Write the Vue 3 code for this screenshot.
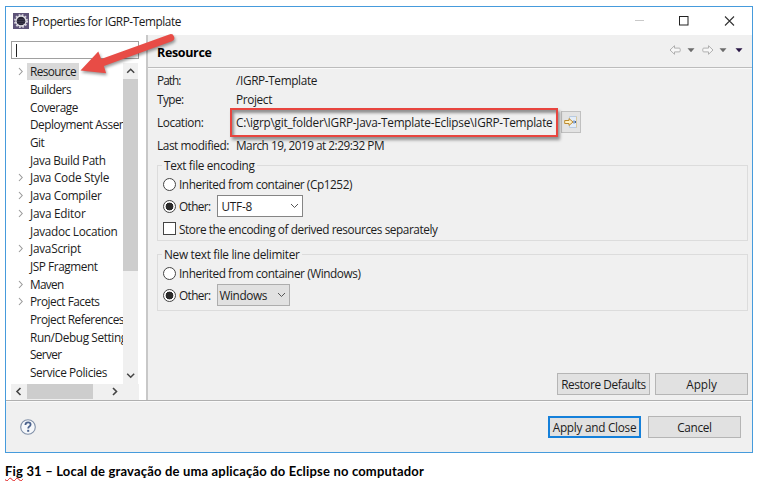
<script setup>
const tree = [
  { label: 'Resource', w: 46, parent: true, selected: true },
  { label: 'Builders', w: 41 },
  { label: 'Coverage', w: 48 },
  { label: 'Deployment Assembly', w: 114 },
  { label: 'Git', w: 14 },
  { label: 'Java Build Path', w: 75.5 },
  { label: 'Java Code Style', w: 79, parent: true },
  { label: 'Java Compiler', w: 71.5, parent: true },
  { label: 'Java Editor', w: 55.5, parent: true },
  { label: 'Javadoc Location', w: 87.5 },
  { label: 'JavaScript', w: 51, parent: true },
  { label: 'JSP Fragment', w: 67.5 },
  { label: 'Maven', w: 33.5, parent: true },
  { label: 'Project Facets', w: 69.5, parent: true },
  { label: 'Project References', w: 94 },
  { label: 'Run/Debug Settings', w: 102 },
  { label: 'Server', w: 31.5 },
  { label: 'Service Policies', w: 77 },
]

// Adjusts tracking so that a label takes the given width in pixels.
const vFit = {
  mounted(el, { value }) {
    const natural = el.getBoundingClientRect().width
    const count = el.textContent.length
    el.style.letterSpacing = `${(value - natural) / count}px`
  },
}
</script>

<template>
  <main class="page">
    <section class="window">
      <header class="titlebar">
        <svg class="app-icon" width="16" height="16" viewBox="0 0 16 16">
          <rect width="16" height="16" fill="#5d5378" />
          <circle cx="8" cy="8" r="6.1" fill="none" stroke="#d6d3dc" stroke-width="1.8" stroke-dasharray="1.7 1.5" />
          <circle cx="8" cy="8" r="5" fill="#272535" stroke="#e6e4ea" stroke-width="1.3" />
          <path d="M4 6.5h8M3.6 8.5h8.8M4.3 10.5h7.4" stroke="#454154" stroke-width=".7" />
        </svg>
        <span v-fit="149" class="title">Properties for IGRP-Template</span>
        <svg class="controls" width="104" height="14" viewBox="0 0 104 14">
          <path d="M1 6.500h9" stroke="#c9c9c9" />
          <rect x="45.500" y="2.500" width="8.500" height="8.500" fill="none" stroke="#222" />
          <path d="M91 2.500l9 9M100 2.500l-9 9" stroke="#333" stroke-width="1.100" />
        </svg>
      </header>

      <div class="body">
        <aside class="sidebar">
          <div class="filter"><i class="caret"></i></div>
          <div class="tree-wrap">
            <ul class="tree">
              <li v-for="item in tree" :key="item.label">
                <svg class="twisty" width="16" height="9" viewBox="0 0 16 9">
                  <path v-if="item.parent" d="M8 1l3.2 3.5L8 8" fill="none" stroke="#999" stroke-width="1.1" />
                </svg>
                <span class="node" :class="{ selected: item.selected }"><span v-fit="item.w">{{ item.label }}</span></span>
              </li>
            </ul>
            <div class="vbar">
              <svg width="15" height="16" viewBox="0 0 15 16"><path d="M4.2 9.8l3.5-3.5 3.5 3.5" fill="none" stroke="#444" stroke-width="1.5" /></svg>
              <div class="vthumb"></div>
              <svg width="15" height="16" viewBox="0 0 15 16"><path d="M4.2 5.8l3.5 3.5 3.5-3.5" fill="none" stroke="#444" stroke-width="1.5" /></svg>
            </div>
          </div>
          <div class="hbar">
            <svg width="16" height="15" viewBox="0 0 16 15"><path d="M9.500 4L6 7.500 9.500 11" fill="none" stroke="#444" stroke-width="1.6" /></svg>
            <div class="hthumb"></div>
            <svg width="16" height="15" viewBox="0 0 16 15"><path d="M6 4L9.500 7.500 6 11" fill="none" stroke="#444" stroke-width="1.6" /></svg>
          </div>
        </aside>

        <section class="content">
          <header class="page-head">
            <h1><span v-fit="54.5">Resource</span></h1>
            <svg width="76" height="12" viewBox="0 0 76 12">
              <g fill="#f7f7f7" stroke="#b0b0b0">
                <path d="M1 6l4.5-4.3v2.4h4.7q1 0 1 1v1.8q0 1-1 1H5.500v2.400z" />
                <path d="M44 6l-4.500-4.300v2.400h-4.700q-1 0-1 1v1.800q0 1 1 1h4.700v2.400z" />
              </g>
              <path d="M18.500 4.300h7l-3.500 4zM50.500 4.300h7l-3.500 4z" fill="#6c6c6c" />
              <path d="M66.500 4.300h7l-3.500 4z" fill="#2a1745" />
            </svg>
          </header>

          <div class="panel">
            <dl class="info">
              <dt><span v-fit="23.500">Path:</span></dt>
              <dd><span v-fit="81">/IGRP-Template</span></dd>
              <dt><span v-fit="26.500">Type:</span></dt>
              <dd><span v-fit="36">Project</span></dd>
              <dt><span v-fit="46.500">Location:</span></dt>
              <dd class="location">
                <span v-fit="316.500">C:\igrp\git_folder\IGRP-Java-Template-Eclipse\IGRP-Template</span>
                <button class="open-btn" aria-label="Show in explorer">
                  <svg width="14" height="12" viewBox="0 0 14 12">
                    <path d="M5.500.5h7v11h-7z" fill="#e4edf8" stroke="#b9cbe0" />
                    <path d="M12.500.5v11" stroke="#d9c9a0" />
                    <path d="M10 4.500v3M11.500 5v2" stroke="#3e659d" />
                    <path d="M.7 4.500h4.300V2.600L9 6 5 9.400V7.500H.7z" fill="#fff2c4" stroke="#bd8a2f" />
                  </svg>
                </button>
                <div class="highlight"></div>
              </dd>
              <dt><span v-fit="72">Last modified:</span></dt>
              <dd><span v-fit="148">March 19, 2019 at 2:29:32 PM</span></dd>
            </dl>

            <fieldset class="encoding">
              <legend><span v-fit="90.500">Text file encoding</span></legend>
              <div class="option"><i class="radio"></i><span v-fit="173">Inherited from container (Cp1252)</span></div>
              <div class="option">
                <i class="radio on"></i><span v-fit="31.500">Other:</span>
                <div class="combo editable">
                  <span v-fit="30.500">UTF-8</span>
                  <svg width="9" height="6" viewBox="0 0 9 6"><path d="M1 1l3.500 3.500L8 1" fill="none" stroke="#555" /></svg>
                </div>
              </div>
              <div class="option check"><i class="box"></i><span v-fit="258.500">Store the encoding of derived resources separately</span></div>
            </fieldset>

            <fieldset class="delimiter">
              <legend><span v-fit="135.500">New text file line delimiter</span></legend>
              <div class="option"><i class="radio"></i><span v-fit="181.500">Inherited from container (Windows)</span></div>
              <div class="option">
                <i class="radio on"></i><span v-fit="31.500">Other:</span>
                <div class="combo">
                  <span v-fit="47.500">Windows</span>
                  <svg width="9" height="6" viewBox="0 0 9 6"><path d="M1 1l3.500 3.500L8 1" fill="none" stroke="#555" /></svg>
                </div>
              </div>
            </fieldset>

            <div class="page-actions">
              <button class="btn"><span v-fit="84.500">Restore Defaults</span></button>
              <button class="btn"><span v-fit="30.500">Apply</span></button>
            </div>
          </div>
        </section>
      </div>

      <footer class="footer">
        <svg width="18" height="18" viewBox="0 0 18 18">
          <circle cx="9" cy="9" r="7.300" fill="#f6f8fb" stroke="#8090a8" stroke-width="1.100" />
          <path d="M6.400 7q.1-2.600 2.700-2.600 2.500 0 2.500 2.200 0 1.100-1.300 2-1.100.8-1.100 1.900" fill="none" stroke="#4b638d" stroke-width="1.800" />
          <rect x="8.200" y="11.800" width="2" height="2" fill="#4b638d" />
        </svg>
        <div class="footer-actions">
          <button class="btn primary"><span v-fit="83.500">Apply and Close</span></button>
          <button class="btn"><span v-fit="34.500">Cancel</span></button>
        </div>
      </footer>

      <svg class="arrow" width="104" height="50" viewBox="76 30 104 50">
        <path d="M80.500 70.500L98.300 51.500l2.900 7.600L169.200 34.400a3.700 3.700 0 0 1 2.700 6.900L103.900 66l2.200 7.300z" fill="#e84c46" />
      </svg>
    </section>

    <p class="caption">
      <span v-fit="419"><span class="misspelt">Fig</span> 31 – Local de gravação de uma aplicação do Eclipse no computador</span>
    </p>
  </main>
</template>

<style>
body { margin: 0; background: #fff; }
</style>

<style scoped>
* { box-sizing: border-box; }
.page {
  width: 757px;
  height: 481px;
  padding: 6px 0 0 5px;
  overflow: hidden;
  background: #fff;
  color: #1c1c1c;
  font: 11.8px/16px "Open Sans", "Noto Sans", sans-serif;
  white-space: nowrap;
}
svg { display: block; flex: none; }
.window {
  position: relative;
  display: flex;
  flex-direction: column;
  width: 748px;
  height: 447px;
  border: 1px solid #469bdc;
  background: #f0f0f0;
}
.titlebar {
  display: flex;
  align-items: center;
  flex: none;
  height: 28px;
  padding-left: 7px;
  background: #fff;
}
.title { margin: -1px 0 0 3px; }
.controls { margin-left: auto; margin-right: 14px; }
.body { display: flex; flex: none; height: 366px; border-bottom: 1px solid #b0b0b0; }
.sidebar {
  flex: none;
  width: 140px;
  padding: 6px 7px 0 5px;
  background: #fff;
}
.filter {
  height: 18px;
  padding: 2px 4px;
  border: 1px solid #a0a0a0;
}
.caret { display: block; width: 1px; height: 13px; background: #222; }
.tree-wrap { display: flex; height: 321px; margin-top: 4px; }
.tree {
  width: 112px;
  margin: 0;
  padding: 0;
  overflow: hidden;
  list-style: none;
}
.tree li { display: flex; align-items: center; height: 17.7px; }
.node { height: 17px; padding: 0 3px; line-height: 17px; }
.node.selected { background: #d9d9d9; }
.vbar { display: flex; flex-direction: column; width: 15px; background: #f0f0f0; }
.vthumb { height: 192px; background: #cdcdcd; }
.vbar svg:last-child { margin-top: auto; }
.hbar { display: flex; width: 128px; height: 16px; background: #f0f0f0; }
.hthumb { width: 66px; height: 15px; background: #cdcdcd; }
.hbar svg:last-child { margin-left: 14px; }
.content {
  display: flex;
  flex: 1;
  flex-direction: column;
  border-left: 2px solid #c8c8c8;
}
.page-head {
  display: flex;
  align-items: center;
  justify-content: space-between;
  height: 33px;
  padding: 3px 7px 0 9px;
  border-bottom: 1px solid #bcbcbc;
  box-shadow: 0 1px #fafafa;
}
.page-head svg { margin-top: -6px; }
h1 { margin: 0; font-size: 12.5px; font-weight: 700; color: #000; }
.panel { display: flex; flex: 1; flex-direction: column; padding: 2px 4px 5px 9px; }
.info {
  display: grid;
  grid-template-columns: 79px 1fr;
  grid-template-rows: 19px 19px 27px 20px;
  align-items: center;
  margin: 0;
}
dd { margin: 0; }
.location { position: relative; display: flex; align-items: center; }
.open-btn {
  display: grid;
  place-items: center;
  width: 20px;
  height: 22px;
  margin-left: 8px;
  padding: 0;
  border: 1px solid #c0c0c0;
  background: #e3e3e3;
}
.highlight {
  position: absolute;
  left: -6px;
  top: -3px;
  width: 328px;
  height: 29px;
  border: 2px solid #e8453f;
  box-shadow: 2px 3px 3px #0006, inset 2px 3px 3px #0006;
}
fieldset {
  min-width: 0;
  margin: 0;
  padding: 0 0 0 5px;
  border: 1px solid #dcdcdc;
}
legend { height: 16px; margin-left: -1px; padding: 0 2px; }
.encoding { height: 84px; margin-top: 2px; }
.delimiter { height: 65px; margin-top: 5px; }
.option { display: flex; align-items: center; height: 22px; }
.option.check { height: 23px; }
.radio {
  flex: none;
  width: 13px;
  height: 13px;
  margin-right: 3px;
  border: 1px solid #444;
  border-radius: 50%;
  background: #fff;
}
.radio.on { background: radial-gradient(circle, #2b2b2b 3.600px, #fff 4.200px); }
.box { flex: none; width: 13px; height: 13px; margin-right: 3px; border: 1px solid #444; background: #fff; }
.combo {
  display: flex;
  align-items: center;
  justify-content: space-between;
  width: 73px;
  height: 22px;
  margin-left: 6px;
  padding: 0 3px 0 2px;
  border: 1px solid #adadad;
  background: #e1e1e1;
}
.combo.editable { width: 86px; padding: 0 3px 0 4px; border-color: #858585; background: #fff; }
.page-actions { display: flex; justify-content: flex-end; gap: 5px; margin-top: auto; }
.btn {
  width: 93px;
  height: 22px;
  padding: 0;
  border: 1px solid #b5b5b5;
  background: #e1e1e1;
  color: inherit;
  font: inherit;
}
.btn.primary { border: 2px solid #1580da; }
.footer {
  display: flex;
  flex: 1;
  align-items: center;
  justify-content: space-between;
  padding: 0 11px 1px 13px;
  border-top: 1px solid #fafafa;
}
.footer-actions { display: flex; gap: 7px; }
.arrow {
  position: absolute;
  left: 70px;
  top: 23px;
  overflow: visible;
  filter: drop-shadow(1px 2px 1.500px #0006);
}
.caption {
  margin: 10px 0 0;
  color: #000;
  font: 700 13px/16px "Lato", "Open Sans", sans-serif;
}
.misspelt {
  text-decoration: underline wavy #e02020 1px;
  text-underline-offset: 1px;
  text-decoration-skip-ink: none;
}
</style>
